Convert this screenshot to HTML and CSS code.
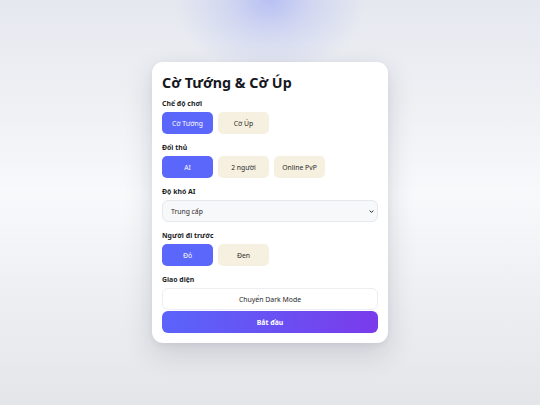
FILE: index.html
```html
<!DOCTYPE html>
<html lang="vi">
<head>
<meta charset="utf-8">
<title>Cờ Tướng &amp; Cờ Úp</title>
<link rel="stylesheet" href="styles.css">
</head>
<body>
<main class="card">
  <h1 class="title">Cờ Tướng &amp; Cờ Úp</h1>

  <section class="group">
    <div class="label">Chế độ chơi</div>
    <div class="options">
      <button class="opt active">Cờ Tướng</button>
      <button class="opt">Cờ Úp</button>
    </div>
  </section>

  <section class="group">
    <div class="label">Đối thủ</div>
    <div class="options">
      <button class="opt active">AI</button>
      <button class="opt">2 người</button>
      <button class="opt">Online PvP</button>
    </div>
  </section>

  <section class="group">
    <div class="label">Độ khó AI</div>
    <div class="select">
      <span>Trung cấp</span>
      <svg class="chev" viewBox="0 0 10 10" width="5" height="5"><path d="M1.5 3.2 L5 6.8 L8.5 3.2" fill="none" stroke="#222" stroke-width="2"/></svg>
    </div>
  </section>

  <section class="group">
    <div class="label">Người đi trước</div>
    <div class="options">
      <button class="opt active">Đỏ</button>
      <button class="opt">Đen</button>
    </div>
  </section>

  <section class="group last">
    <div class="label">Giao diện</div>
    <button class="wide theme">Chuyển Dark Mode</button>
    <button class="wide start">Bắt đầu</button>
  </section>
</main>
</body>
</html>
```

FILE: styles.css
```css
* { box-sizing: border-box; }
html, body { margin: 0; padding: 0; }
body {
  width: 540px;
  height: 405px;
  overflow: hidden;
  font-family: "Noto Sans", "DejaVu Sans", sans-serif;
  display: flex;
  align-items: center;
  justify-content: center;
  background:
    radial-gradient(ellipse 95px 75px at 270px 0px, rgba(176,186,244,0.85) 0%, rgba(190,198,242,0.5) 45%, rgba(215,220,240,0) 100%),
    linear-gradient(to bottom, #e5e8ef 0%, #eef0f4 25%, #f8f9fb 48%, #eff0f3 70%, #e3e5e9 100%);
}
.card {
  width: 236px;
  height: 281px;
  background: #ffffff;
  border-radius: 11px;
  padding: 10px 10px 10px;
  box-shadow: 0 10px 28px rgba(40, 45, 70, 0.16), 0 2px 6px rgba(40, 45, 70, 0.06);
  display: flex;
  flex-direction: column;
  gap: 8px;
}
.title {
  margin: 1px 0 -3px;
  font-size: 14.3px;
  line-height: 20px;
  font-weight: 700;
  color: #16181f;
}
.group { display: flex; flex-direction: column; }
.label {
  font-size: 6.9px;
  line-height: 11px;
  font-weight: 700;
  color: #1c1e26;
  margin-bottom: 3px;
}
.options { display: flex; gap: 5px; }
.opt {
  width: 51px;
  height: 22px;
  border: none;
  border-radius: 5px;
  padding: 0;
  font-family: inherit;
  font-size: 6.8px;
  color: #2a2a2a;
  background: #f5f0df;
}
.opt.active {
  background: #5b67fa;
  color: #ffffff;
}
.select {
  height: 22px;
  border: 1px solid #e6e8ee;
  border-radius: 6px;
  background: #f7f8fa;
  display: flex;
  align-items: center;
  justify-content: space-between;
  padding: 0 3px 0 8px;
  font-size: 6.8px;
  color: #2a2a2a;
}
.chev { display: block; }
.wide {
  width: 100%;
  border-radius: 6px;
  font-family: inherit;
  font-size: 6.9px;
  padding: 0;
}
.theme {
  height: 22px;
  background: #ffffff;
  border: 1px solid #eceef2;
  color: #2a2a2a;
}
.start {
  margin-top: 1px;
  height: 22px;
  border: none;
  background: linear-gradient(100deg, #5a64fb 0%, #6a4ff3 55%, #7b3aeb 100%);
  color: #ffffff;
  font-weight: 700;
}
```
